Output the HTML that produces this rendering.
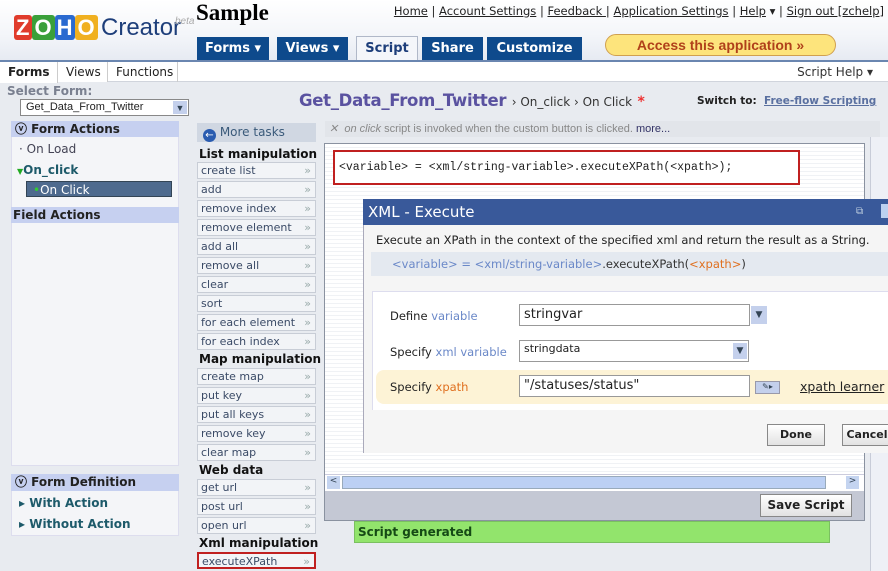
<!DOCTYPE html>
<html><head><meta charset="utf-8"><style>
*{margin:0;padding:0;box-sizing:border-box}
body{width:888px;height:571px;overflow:hidden;position:relative;background:#e8ebf0;font-family:"DejaVu Sans","Liberation Sans",sans-serif;font-size:12px;color:#222}
.a{position:absolute}
.hdr{left:0;top:0;width:888px;height:61px;background:linear-gradient(#fff,#f3f5f9 60%,#e6eaf2)}
.tab{position:absolute;top:37px;height:24px;background:#0e4a8c;color:#fff;font-weight:bold;font-size:13px;text-align:center;line-height:24px}
.links{right:4px;top:4px;font-size:11.5px;color:#222}
.links u{color:#222}
.item{position:absolute;left:197px;width:119px;height:17px;border:1px solid #c8cdd6;background:#f2f4f7;font-size:11px;color:#3a4a66;line-height:15px;padding-left:3px}
.item:after{content:"»";position:absolute;right:4px;color:#9aa;font-size:11px}
.h{position:absolute;left:199px;font-weight:bold;font-size:12px;color:#111}
.btn{position:absolute;border:1px solid #888;background:linear-gradient(#fff,#e2e2e2);font-weight:bold;font-size:12px;text-align:center;color:#222}
</style></head><body>
<div class="a hdr"></div>
<div class="a" style="left:14px;top:15px;font:bold 22px 'Liberation Sans';letter-spacing:1px">
<span style="background:#e03c2c;color:#fff;padding:0 2px;border-radius:3px">Z</span><span style="background:#3aa03a;color:#fff;padding:0 2px;border-radius:3px">O</span><span style="background:#2a6ad0;color:#fff;padding:0 2px;border-radius:3px">H</span><span style="background:#f0b020;color:#fff;padding:0 2px;border-radius:3px">O</span></div>
<div class="a" style="left:101px;top:14px;font:24px 'Liberation Sans';color:#1d3e7a">Creator</div>
<div class="a" style="left:175px;top:16px;font:italic 10px 'Liberation Sans';color:#aaa">beta</div>
<div class="a" style="left:196px;top:0px;font:bold 23px 'Liberation Serif';color:#000">Sample</div>
<div class="a links"><u>Home</u> | <u>Account Settings</u> | <u>Feedback </u> | <u>Application Settings</u> | <u>Help</u> ▾ | <u>Sign out [zchelp]</u></div>
<div class="tab" style="left:197px;width:72px">Forms ▾</div>
<div class="tab" style="left:277px;width:71px">Views ▾</div>
<div class="tab" style="left:356px;width:62px;background:#f4f6fa;color:#1d3e7a;border:1px solid #b0b8c8;border-bottom:none;top:36px;height:26px">Script</div>
<div class="tab" style="left:422px;width:61px">Share</div>
<div class="tab" style="left:487px;width:95px">Customize</div>
<div class="a" style="left:0;top:60px;width:888px;height:2px;background:#6a86b0"></div>
<div class="a" style="left:605px;top:34px;width:231px;height:22px;border:1px solid #d0a050;border-radius:11px;background:#fde47c;color:#b0401a;font:bold 14px 'Liberation Sans';text-align:center;line-height:20px">Access this application »</div>
<div class="a" style="left:0;top:62px;width:888px;height:20px;background:#fff;border-bottom:1px solid #d0d4dc"></div>
<div class="a" style="left:0;top:62px;width:58px;height:21px;background:#fff;border-right:1px solid #ccc;font-weight:bold;line-height:20px;padding-left:8px">Forms</div>
<div class="a" style="left:58px;top:62px;width:50px;height:20px;background:#fff;border-right:1px solid #ccc;line-height:20px;padding-left:8px">Views</div>
<div class="a" style="left:108px;top:62px;width:70px;height:20px;border-right:1px solid #ccc;line-height:20px;padding-left:8px">Functions</div>
<div class="a" style="right:15px;top:65px;color:#333">Script Help ▾</div>
<div class="a" style="left:7px;top:84px;font-weight:bold;color:#7a8090">Select Form:</div>
<div class="a" style="left:20px;top:99px;width:169px;height:17px;border:1px solid #888;background:#fff;font:11px 'Liberation Sans';padding-left:5px;line-height:15px">Get_Data_From_Twitter<span style="position:absolute;right:1px;top:1px;width:14px;height:13px;background:#c4d0ec;color:#345;font-size:9px;text-align:center">▼</span></div>
<div class="a" style="left:11px;top:121px;width:168px;height:345px;background:#f4f5f8;border:1px solid #dde"></div>
<div class="a" style="left:11px;top:121px;width:168px;height:16px;background:#c6d0f0;font-weight:bold;line-height:16px;padding-left:4px">ⓥ Form Actions</div>
<div class="a" style="left:19px;top:142px;color:#445">· On Load</div>
<div class="a" style="left:17px;top:163px;color:#1d5a6a;font-weight:bold"><span style="color:#2a2;font-size:8px">▼</span>On_click</div>
<div class="a" style="left:26px;top:181px;width:146px;height:16px;background:#4e6a8e;color:#fff;line-height:16px;padding-left:6px;border:1px solid #345"><span style="color:#3c3">•</span>On Click</div>
<div class="a" style="left:11px;top:207px;width:168px;height:16px;background:#c6d0f0;font-weight:bold;line-height:16px;padding-left:2px">Field Actions</div>
<div class="a" style="left:11px;top:474px;width:168px;height:62px;background:#f4f5f8;border:1px solid #dde"></div>
<div class="a" style="left:11px;top:474px;width:168px;height:17px;background:#c6d0f0;font-weight:bold;line-height:17px;padding-left:4px">ⓥ Form Definition</div>
<div class="a" style="left:19px;top:496px;color:#1d5a6a;font-weight:bold">▸ With Action</div>
<div class="a" style="left:19px;top:517px;color:#1d5a6a;font-weight:bold">▸ Without Action</div>
<div class="a" style="left:299px;top:91px;font:bold 16.5px 'DejaVu Sans';color:#5a52a0;letter-spacing:-0.3px">Get_Data_From_Twitter <span style="font-size:12px;color:#333;font-weight:normal;letter-spacing:0">› On_click › On Click</span> <span style="color:#e33;font-size:14px">*</span></div>
<div class="a" style="left:697px;top:95px;font-size:10.5px;font-weight:bold">Switch to:</div>
<div class="a" style="left:764px;top:95px;font-size:10.5px;font-weight:bold;color:#5a70a0;text-decoration:underline">Free-flow Scripting</div>
<div class="a" style="left:197px;top:123px;width:119px;height:19px;background:#d0d7e2;color:#3a5a7a;line-height:19px;padding-left:6px"><span style="display:inline-block;width:13px;height:13px;border-radius:50%;background:#2a5cb0;color:#fff;font-size:10px;line-height:13px;text-align:center;vertical-align:-2px">←</span> More tasks</div>
<div class="h" style="top:147px">List manipulation</div>
<div class="item" style="top:162px">create list</div>
<div class="item" style="top:181px">add</div>
<div class="item" style="top:200px">remove index</div>
<div class="item" style="top:219px">remove element</div>
<div class="item" style="top:238px">add all</div>
<div class="item" style="top:257px">remove all</div>
<div class="item" style="top:276px">clear</div>
<div class="item" style="top:295px">sort</div>
<div class="item" style="top:314px">for each element</div>
<div class="item" style="top:333px">for each index</div>
<div class="h" style="top:352px">Map manipulation</div>
<div class="item" style="top:368px">create map</div>
<div class="item" style="top:387px">put key</div>
<div class="item" style="top:406px">put all keys</div>
<div class="item" style="top:425px">remove key</div>
<div class="item" style="top:444px">clear map</div>
<div class="h" style="top:463px">Web data</div>
<div class="item" style="top:479px">get url</div>
<div class="item" style="top:498px">post url</div>
<div class="item" style="top:517px">open url</div>
<div class="h" style="top:536px">Xml manipulation</div>
<div class="item" style="top:552px;border:2px solid #c02020">executeXPath</div>
<div class="a" style="left:325px;top:121px;width:555px;height:16px;background:#e2e5ea;font:italic 11px 'Liberation Sans';color:#888;line-height:16px;padding-left:4px">✕ &nbsp;on click <span style="font-style:normal">script is invoked when the custom button is clicked. <span style="color:#336">more...</span></span></div>
<div class="a" style="left:324px;top:143px;width:541px;height:378px;border:1px solid #8a92a0;background:#c4c8d4"></div>
<div class="a" style="left:325px;top:144px;width:539px;height:330px;background:repeating-linear-gradient(#fff 0 3px,#f0f2f5 3px 4px)"></div>
<div class="a" style="left:333px;top:150px;width:467px;height:35px;border:2px solid #c02020;background:#fff;font:11.5px 'Liberation Mono';line-height:31px;padding-left:4px">&lt;variable&gt; = &lt;xml/string-variable&gt;.executeXPath(&lt;xpath&gt;);</div>
<div class="a" style="left:325px;top:474px;width:539px;height:17px;background:#fff;border-top:1px solid #ccd"></div>
<div class="a" style="left:327px;top:476px;width:13px;height:13px;background:#c4d4f0;color:#345;font-size:9px;text-align:center">&lt;</div>
<div class="a" style="left:342px;top:476px;width:484px;height:13px;background:#bcd0f4;border:1px solid #9ab;"></div>
<div class="a" style="left:846px;top:476px;width:13px;height:13px;background:#c4d4f0;color:#345;font-size:9px;text-align:center">&gt;</div>
<div class="btn" style="left:760px;top:494px;width:92px;height:23px;line-height:21px">Save Script</div>
<div class="a" style="left:354px;top:521px;width:476px;height:22px;background:#92e46c;border:1px solid #7ac060;color:#154a15;font-weight:bold;line-height:20px;padding-left:3px">Script generated</div>
<div class="a" style="left:870px;top:137px;width:18px;height:434px;background:#eef0f6;border-left:1px solid #c8ccd8"></div>
<div class="a" style="left:363px;top:199px;width:525px;height:254px;background:#f5f5f5;border-left:1px solid #aab"></div>
<div class="a" style="left:363px;top:199px;width:525px;height:26px;background:#39599a;color:#fff;font:15px 'DejaVu Sans';line-height:26px;padding-left:5px">XML - Execute<span style="position:absolute;left:493px;font-size:10px;color:#bcd">⧉</span><span style="position:absolute;left:518px;top:5px;width:7px;height:14px;background:#bcd0f0"></span></div>
<div class="a" style="left:376px;top:233px;font-size:11.5px">Execute an XPath in the context of the specified xml and return the result as a String.</div>
<div class="a" style="left:371px;top:252px;width:517px;height:24px;background:#e4e9f0;font:11.5px 'DejaVu Sans';line-height:24px;padding-left:21px;color:#333"><span style="color:#6a88c8">&lt;variable&gt; = &lt;xml/string-variable&gt;</span>.executeXPath(<span style="color:#e07020">&lt;xpath&gt;</span>)</div>
<div class="a" style="left:372px;top:291px;width:516px;height:119px;background:#fff;border-top:1px solid #dde;border-left:1px solid #dde"></div>
<div class="a" style="left:376px;top:370px;width:512px;height:34px;background:#fdf3d6;border-radius:8px 0 0 8px"></div>
<div class="a" style="left:390px;top:309px;font-size:11.5px">Define <span style="color:#6a88c8">variable</span></div>
<div class="a" style="left:519px;top:304px;width:231px;height:22px;border:1px solid #999;background:#fff;font:13px 'DejaVu Sans';line-height:20px;padding-left:4px">stringvar</div>
<div class="a" style="left:751px;top:306px;width:16px;height:18px;background:#c4d0ec;color:#345;font-size:9px;text-align:center;line-height:18px">▼</div>
<div class="a" style="left:390px;top:345px;font-size:11.5px">Specify <span style="color:#6a88c8">xml variable</span></div>
<div class="a" style="left:519px;top:340px;width:230px;height:22px;border:1px solid #999;background:#fff;font:11px 'DejaVu Sans';line-height:16px;padding-left:4px">stringdata<span style="position:absolute;right:1px;top:2px;width:14px;height:16px;background:#c4d0ec;color:#345;font-size:9px;text-align:center;line-height:16px">▼</span></div>
<div class="a" style="left:390px;top:380px;font-size:11.5px">Specify <span style="color:#e07020">xpath</span></div>
<div class="a" style="left:519px;top:375px;width:231px;height:22px;border:1px solid #999;background:#fff;font:13px 'DejaVu Sans';line-height:20px;padding-left:4px">"/statuses/status"</div>
<div class="a" style="left:755px;top:381px;width:25px;height:13px;background:#c4d0ec;border:1px solid #99a;font-size:8px;text-align:center;color:#345">✎▸</div>
<div class="a" style="left:800px;top:379px;font-size:12.5px;text-decoration:underline">xpath learner</div>
<div class="btn" style="left:767px;top:424px;width:58px;height:22px;line-height:20px;font-size:11px">Done</div>
<div class="btn" style="left:842px;top:424px;width:50px;height:22px;line-height:20px;font-size:11px">Cancel</div>
</body></html>
